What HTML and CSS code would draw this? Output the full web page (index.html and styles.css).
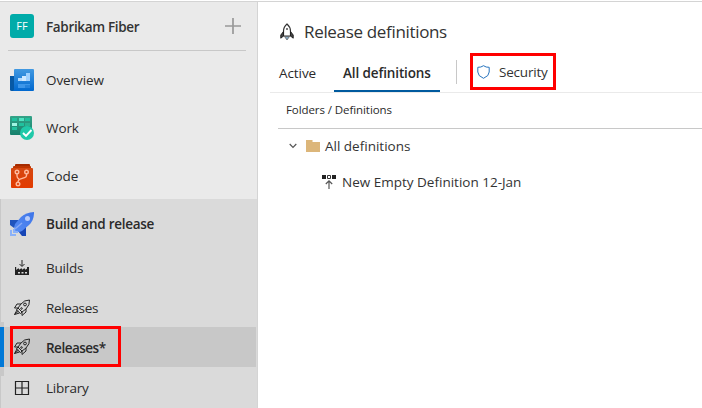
FILE: index.html
```html
<!DOCTYPE html>
<html lang="en">
<head>
<meta charset="utf-8">
<title>Release definitions</title>
<link rel="stylesheet" href="styles.css">
</head>
<body>
<div class="app">
  <nav class="sidebar">
    <div class="project">
      <span class="avatar">FF</span>
      <span class="label project-name">Fabrikam Fiber</span>
      <svg class="plus" width="16" height="16" viewBox="0 0 16 16"><path d="M8 0v16M0 8h16" stroke="#999" stroke-width="1.700"/></svg>
    </div>
    <a class="hub">
      <svg class="icon" width="24" height="24" viewBox="0 0 24 24">
        <defs><linearGradient id="blue" x2="0" y2="1"><stop stop-color="#4299e1"/><stop offset="1" stop-color="#0068cf"/></linearGradient></defs>
        <path d="M0 8h5v15H1.500a1.500 1.500 0 0 1-1.500-1.500z" fill="#0759a5"/>
        <path d="M5 1h18a1 1 0 0 1 1 1v20a1 1 0 0 1-1 1H3q1-1 1-2V2a1 1 0 0 1 1-1z" fill="url(#blue)"/>
        <path d="M8 10h4v3H8z" fill="#b5dcff"/><path d="M12 8h4v5h-4z" fill="#cfe8ff"/><path d="M16 5h4v8h-4z" fill="#9ed0ff"/>
        <path d="M8 16h12v1.500h-5V20H8z" fill="#3d96e9"/><path d="M15 17.500h5V20h-5z" fill="#2582dc"/>
      </svg>
      <span class="label">Overview</span>
    </a>
    <a class="hub">
      <svg class="icon" width="24" height="24" viewBox="0 0 24 24">
        <defs><linearGradient id="green" x2="0" y2="1"><stop stop-color="#34a388"/><stop offset="1" stop-color="#16806c"/></linearGradient></defs>
        <rect width="22" height="19" rx="1" fill="url(#green)"/>
        <path d="M2 2h5v3H2zM15 2h5v3h-5zM9 7h5v3H9zM2 11h5v3H2z" fill="#20c19e"/>
        <path d="M9 2h5v3H9z" fill="#50e3c2"/><path d="M2 7h5v3H2z" fill="#9ff5e2"/><path d="M15 7h5v3h-5z" fill="#2ab392"/>
        <circle cx="17" cy="17" r="7" fill="#20c9a9"/>
        <path d="M13 17l3 3 5.500-6" fill="none" stroke="#fff" stroke-width="1.900"/>
      </svg>
      <span class="label">Work</span>
    </a>
    <a class="hub">
      <svg class="icon" width="24" height="24" viewBox="0 0 24 24">
        <defs><linearGradient id="orange" x2="0" y2="1"><stop stop-color="#d54811"/><stop offset="1" stop-color="#e33b00"/></linearGradient></defs>
        <path d="M5 3V1q0-1 1-1h13q1 0 1 1v2z" fill="#a52b00"/><path d="M3 5V3q0-1 1-1h16q1 0 1 1v2z" fill="#bd3500"/>
        <rect x="1" y="4" width="22" height="20" rx="1" fill="url(#orange)"/>
        <g fill="none" stroke="#ffb99c" stroke-width="1.400"><circle cx="7" cy="8" r="1.800"/><circle cx="16.500" cy="8" r="1.800"/><circle cx="8" cy="20" r="1.800"/><path d="M7 10v2q0 2 2 3M16.500 10v1.500q0 1.500-2 2.200L10 15.200q-2 .8-2 3"/></g>
      </svg>
      <span class="label">Code</span>
    </a>
    <section class="group">
      <a class="hub">
        <svg class="icon" width="24" height="24" viewBox="0 0 24 24">
          <defs><linearGradient id="rocket" x1="1" x2="0" y2="1"><stop stop-color="#3e75e8"/><stop offset="1" stop-color="#568cf4"/></linearGradient></defs>
          <path d="M0 8h9l-5 8-4-3z" fill="#2054bd"/><path d="M16 14v10h-4l-4-5z" fill="#1645b6"/>
          <path d="M24 0q.3 8-5 13l-7 6q-3 1.500-6.500.500Q3.500 16 5 12l6-7Q16 .5 24 0z" fill="url(#rocket)"/>
          <circle cx="17.500" cy="6.500" r="2.500" fill="#b8ccf9"/>
          <path d="M5 17l7-6" stroke="#87a9f7" stroke-width="1.500"/>
          <path d="M0 18h2v4h4v2H0zM3 17h2v2h3v2H3z" fill="#8ab1f8"/>
        </svg>
        <span class="label w-build">Build and release</span>
      </a>
      <a class="sub">
        <svg class="icon small" width="16" height="16" viewBox="0 0 16 16"><path d="M8 0v6M5.500 4L8 6.500 10.500 4" fill="none" stroke="#222"/><path fill-rule="evenodd" d="M1 7h1.200v3L4 8.500h1v1.200L7 8.500h1v1.200L10 8.500h1v1.200l2-1V7h2v8H1zM4 12v1.500h2V12zM7.500 12v1.500h2V12zM11 12v1.500h2V12z" fill="#222"/></svg>
        <span class="label w-builds">Builds</span>
      </a>
      <a class="sub">
        <svg class="icon small" width="18" height="18" viewBox="0 0 18 18"><g fill="none" stroke="#222"><path d="M16.500 1Q11 1 8 5l-3 4 4 4 4-3q4-4 3.500-9zM8 5H4L1.500 9H5M13 10v3l-4 3.500V13M5 9l-1.500 2 4 3.500L9 13M4 11l-2.500 4.500L6.500 14M1.500 15.500l4-3.500"/><circle cx="12" cy="5.500" r="1.400"/><circle cx="8.500" cy="9.500" r=".8"/></g></svg>
        <span class="label w-releases">Releases</span>
      </a>
      <a class="sub selected">
        <svg class="icon small" width="18" height="18" viewBox="0 0 18 18"><g fill="none" stroke="#222"><path d="M16.500 1Q11 1 8 5l-3 4 4 4 4-3q4-4 3.500-9zM8 5H4L1.500 9H5M13 10v3l-4 3.500V13M5 9l-1.500 2 4 3.500L9 13M4 11l-2.500 4.500L6.500 14M1.500 15.500l4-3.500"/><circle cx="12" cy="5.500" r="1.400"/><circle cx="8.500" cy="9.500" r=".8"/></g></svg>
        <span class="label w-selected">Releases*</span>
        <span class="callout"></span>
      </a>
      <a class="sub library">
        <svg class="icon small" width="14" height="14" viewBox="0 0 14 14"><path d="M.5.500h13v13H.500zM7 .5v13M.5 7h13" fill="none" stroke="#222" stroke-width="1.200"/></svg>
        <span class="label w-library">Library</span>
      </a>
    </section>
  </nav>
  <main class="content">
    <header class="heading">
      <svg width="14" height="18" viewBox="0 0 14 18"><path d="M7 1Q3.500 4 3.500 8v5h7V8Q10.500 4 7 1z" fill="#fff" stroke="#333" stroke-width="1.200"/><path d="M3.500 8.500L.8 12v3.200l2.700-2.200zM10.500 8.500l2.700 3.500v3.200L10.500 13z" fill="#444" stroke="#222"/><circle cx="7" cy="6" r="1" fill="#555"/><path d="M4.500 13.500L7 17l2.500-3.500z" fill="#88aac4" stroke="#555" stroke-width=".7"/></svg>
      <h1 class="label">Release definitions</h1>
    </header>
    <div class="tabs">
      <a class="tab"><span class="label">Active</span></a>
      <a class="tab current"><span class="label">All definitions</span></a>
      <span class="divider"></span>
      <a class="security">
        <svg width="13" height="14" viewBox="0 0 13 14"><path d="M6.500.7Q4 2.500.8 2.300V7q0 4 5.700 6.300Q12.200 11 12.200 7V2.300Q9 2.500 6.500.7z" fill="none" stroke="#2673bd"/></svg>
        <span class="label">Security</span>
      </a>
    </div>
    <div class="tree">
      <div class="tree-head"><span class="label">Folders / Definitions</span></div>
      <div class="row folder">
        <svg class="chevron" width="8" height="6" viewBox="0 0 8 6"><path d="M.7 1L4 4.300 7.300 1" fill="none" stroke="#555" stroke-width="1.200"/></svg>
        <svg class="folder-icon" width="14" height="12" viewBox="0 0 14 12"><path d="M0 0h6.500v2H14v10H0z" fill="#dcb67a"/></svg>
        <span class="label">All definitions</span>
      </div>
      <div class="row definition">
        <svg width="14" height="14" viewBox="0 0 14 14"><path d="M0 0h4v4H0zM10 0h4v4h-4z" fill="#222"/><path d="M5.500.5h3v3h-3z" fill="none" stroke="#333"/><path d="M7 14V6M3.800 9L7 5.800 10.200 9" fill="none" stroke="#555" stroke-width="1.200"/></svg>
        <span class="label">New Empty Definition 12-Jan</span>
      </div>
    </div>
  </main>
</div>
</body>
</html>
```
FILE: styles.css
```css
* { box-sizing: border-box; }
body {
  margin: 0;
  background: #fff;
  color: #2a2a2a;
  font: 13.5px/20px "Open Sans", "Noto Sans", sans-serif;
}
svg { display: block; flex: none; }
.label { white-space: nowrap; letter-spacing: -0.08px; }
.app {
  display: flex;
  height: 408px;
  border-top: 1px solid #fff;
  overflow: hidden;
}
.sidebar {
  width: 258px;
  flex: none;
  background: #eaeaea;
  border-top: 1px solid #d4d4d4;
  border-right: 1px solid #d4d4d4;
}
.project {
  display: flex;
  align-items: center;
  height: 49px;
  margin: 0 11px 5px 8px;
  padding: 0 5px 0 2px;
  border-bottom: 1px solid #c8c8c8;
}
.avatar {
  width: 24px;
  height: 24px;
  margin-right: 12px;
  border-radius: 3px;
  background: #00aba9;
  color: #fff;
  font-size: 11px;
  line-height: 24px;
  text-align: center;
}
.project-name { padding-top: 2px; font-weight: 600; color: #333; letter-spacing: -0.33px; }
.plus { margin-left: auto; }
.hub, .sub { display: flex; align-items: center; padding-left: 10px; }
.hub { height: 48px; }
.icon { margin-right: 12px; }
.group {
  margin-top: -1px;
  height: 220px;
  background: #dadada;
  border-left: 1px solid #c8c8c8;
}
.group .hub { height: 49px; padding-left: 9px; font-weight: 600; }
.w-build { letter-spacing: -0.26px; }
.sub { height: 40px; padding-left: 12px; }
.sub .icon { width: 18px; margin-right: 15px; }
.w-builds, .w-library { letter-spacing: -0.2px; }
.w-releases { letter-spacing: -0.36px; }
.w-selected { padding-top: 2px; letter-spacing: -0.5px; }
.selected {
  position: relative;
  margin: -1px 1px 0 -1px;
  padding-left: 9px;
  background: #c8c8c8;
  border-left: 4px solid #0078d7;
  font-weight: 600;
}
.selected::before, .selected::after {
  content: "";
  position: absolute;
  left: -4px;
  width: 4px;
  background: #c8c8c8;
}
.selected::before { top: -5px; height: 5px; }
.selected::after { bottom: -9px; height: 9px; }
.callout { position: absolute; left: 6px; top: -1px; width: 111px; height: 41px; border: 3px solid #f00; }
.library { height: 41px; }
.content { flex: 1; min-width: 0; border-top: 1px solid #d4d4d4; }
.heading { display: flex; align-items: center; height: 50px; padding: 9px 0 0 22px; }
.heading h1 { margin: 0 0 0 10px; font-size: 17px; line-height: 24px; font-weight: 400; color: #333; letter-spacing: -0.33px; }
.tabs {
  display: flex;
  align-items: flex-start;
  height: 41px;
  margin-left: 12px;
  border-bottom: 1px solid #eaeaea;
}
.tab { height: 40px; padding: 11px 9px 0; }
.current { margin-left: 9px; width: 106px; border-bottom: 2px solid #005a9e; font-weight: 600; }
.current .label { letter-spacing: -0.13px; }
.divider { width: 1px; height: 24px; margin: 8px 13px 0 16px; background: #c8c8c8; }
.security {
  display: flex;
  align-items: center;
  width: 86px;
  height: 37px;
  margin-top: 1px;
  padding-left: 4px;
  border: 3px solid #f00;
}
.security .label { margin-left: 9px; color: #333; letter-spacing: -0.22px; }
.tree { margin-left: 20px; }
.tree-head { height: 36px; padding: 7px 0 0 8px; border-bottom: 1px solid #c8c8c8; font-size: 11.5px; }
.row { display: flex; align-items: center; height: 36px; color: #333; }
.row .label { letter-spacing: 0; }
.folder { height: 35px; padding: 0 0 1px 11px; }
.folder-icon { margin: 0 5px 0 9px; }
.definition { padding-left: 44px; }
.definition .label { margin-left: 6px; }
```
